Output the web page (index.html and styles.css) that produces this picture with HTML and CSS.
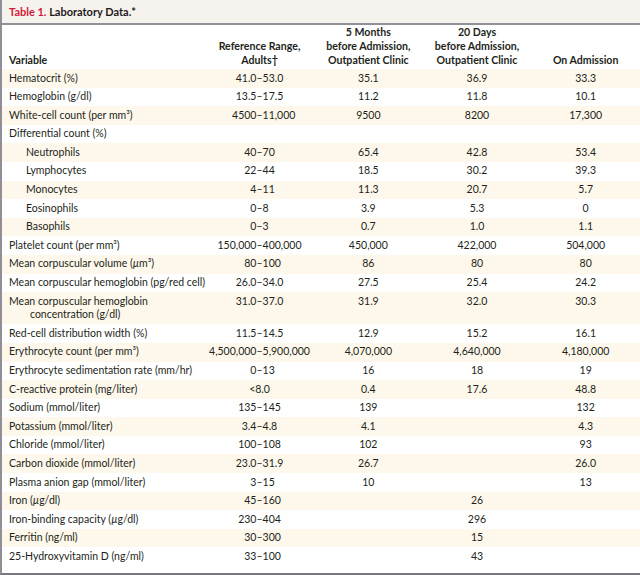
FILE: index.html
```html
<!DOCTYPE html>
<html lang="en">
<head>
<meta charset="utf-8">
<title>Table 1. Laboratory Data</title>
<link rel="stylesheet" href="styles.css">
</head>
<body>
<div class="page">
  <div class="title"><span class="label">Table 1.</span> Laboratory Data.*</div>
  <table class="lab">
    <colgroup>
      <col class="c-var"><col class="c-ref"><col class="c-val"><col class="c-val"><col class="c-val">
    </colgroup>
    <thead>
      <tr>
        <th class="var">Variable</th>
        <th>Reference Range,<br>Adults†</th>
        <th>5 Months<br>before Admission,<br>Outpatient Clinic</th>
        <th>20 Days<br>before Admission,<br>Outpatient Clinic</th>
        <th>On Admission</th>
      </tr>
    </thead>
    <tbody>
      <tr><td class="var">Hematocrit (%)</td><td><div class="rng"><span>41.0</span><span>–</span><span>53.0</span></div></td><td>35.1</td><td>36.9</td><td>33.3</td></tr>
      <tr><td class="var">Hemoglobin (g/dl)</td><td><div class="rng"><span>13.5</span><span>–</span><span>17.5</span></div></td><td>11.2</td><td>11.8</td><td>10.1</td></tr>
      <tr><td class="var">White-cell count (per mm³)</td><td><div class="rng"><span>4500</span><span>–</span><span>11,000</span></div></td><td>9500</td><td>8200</td><td>17,300</td></tr>
      <tr><td class="var">Differential count (%)</td><td></td><td></td><td></td><td></td></tr>
      <tr><td class="var sub">Neutrophils</td><td><div class="rng"><span>40</span><span>–</span><span>70</span></div></td><td>65.4</td><td>42.8</td><td>53.4</td></tr>
      <tr><td class="var sub">Lymphocytes</td><td><div class="rng"><span>22</span><span>–</span><span>44</span></div></td><td>18.5</td><td>30.2</td><td>39.3</td></tr>
      <tr><td class="var sub">Monocytes</td><td><div class="rng"><span>4</span><span>–</span><span>11</span></div></td><td>11.3</td><td>20.7</td><td>5.7</td></tr>
      <tr><td class="var sub">Eosinophils</td><td><div class="rng"><span>0</span><span>–</span><span>8</span></div></td><td>3.9</td><td>5.3</td><td>0</td></tr>
      <tr><td class="var sub">Basophils</td><td><div class="rng"><span>0</span><span>–</span><span>3</span></div></td><td>0.7</td><td>1.0</td><td>1.1</td></tr>
      <tr><td class="var">Platelet count (per mm³)</td><td><div class="rng"><span>150,000</span><span>–</span><span>400,000</span></div></td><td>450,000</td><td>422,000</td><td>504,000</td></tr>
      <tr><td class="var">Mean corpuscular volume (<i>µ</i>m³)</td><td><div class="rng"><span>80</span><span>–</span><span>100</span></div></td><td>86</td><td>80</td><td>80</td></tr>
      <tr><td class="var">Mean corpuscular hemoglobin (pg/red cell)</td><td><div class="rng"><span>26.0</span><span>–</span><span>34.0</span></div></td><td>27.5</td><td>25.4</td><td>24.2</td></tr>
      <tr class="tall"><td class="var">Mean corpuscular hemoglobin<br><span class="cont">concentration (g/dl)</span></td><td><div class="rng"><span>31.0</span><span>–</span><span>37.0</span></div></td><td>31.9</td><td>32.0</td><td>30.3</td></tr>
      <tr><td class="var">Red-cell distribution width (%)</td><td><div class="rng"><span>11.5</span><span>–</span><span>14.5</span></div></td><td>12.9</td><td>15.2</td><td>16.1</td></tr>
      <tr><td class="var">Erythrocyte count (per mm³)</td><td><div class="rng"><span>4,500,000</span><span>–</span><span>5,900,000</span></div></td><td>4,070,000</td><td>4,640,000</td><td>4,180,000</td></tr>
      <tr><td class="var">Erythrocyte sedimentation rate (mm/hr)</td><td><div class="rng"><span>0</span><span>–</span><span>13</span></div></td><td>16</td><td>18</td><td>19</td></tr>
      <tr><td class="var">C-reactive protein (mg/liter)</td><td>&lt;8.0</td><td>0.4</td><td>17.6</td><td>48.8</td></tr>
      <tr><td class="var">Sodium (mmol/liter)</td><td><div class="rng"><span>135</span><span>–</span><span>145</span></div></td><td>139</td><td></td><td>132</td></tr>
      <tr><td class="var">Potassium (mmol/liter)</td><td><div class="rng"><span>3.4</span><span>–</span><span>4.8</span></div></td><td>4.1</td><td></td><td>4.3</td></tr>
      <tr><td class="var">Chloride (mmol/liter)</td><td><div class="rng"><span>100</span><span>–</span><span>108</span></div></td><td>102</td><td></td><td>93</td></tr>
      <tr><td class="var">Carbon dioxide (mmol/liter)</td><td><div class="rng"><span>23.0</span><span>–</span><span>31.9</span></div></td><td>26.7</td><td></td><td>26.0</td></tr>
      <tr><td class="var">Plasma anion gap (mmol/liter)</td><td><div class="rng"><span>3</span><span>–</span><span>15</span></div></td><td>10</td><td></td><td>13</td></tr>
      <tr><td class="var">Iron (<i>µ</i>g/dl)</td><td><div class="rng"><span>45</span><span>–</span><span>160</span></div></td><td></td><td>26</td><td></td></tr>
      <tr><td class="var">Iron-binding capacity (<i>µ</i>g/dl)</td><td><div class="rng"><span>230</span><span>–</span><span>404</span></div></td><td></td><td>296</td><td></td></tr>
      <tr><td class="var">Ferritin (ng/ml)</td><td><div class="rng"><span>30</span><span>–</span><span>300</span></div></td><td></td><td>15</td><td></td></tr>
      <tr><td class="var">25-Hydroxyvitamin D (ng/ml)</td><td><div class="rng"><span>33</span><span>–</span><span>100</span></div></td><td></td><td>43</td><td></td></tr>
    </tbody>
  </table>
</div>
</body>
</html>
```

FILE: styles.css
```css
* { box-sizing: border-box; }
html, body { margin: 0; padding: 0; background: #fff; }
body {
  font-family: Lato, "Open Sans", "Liberation Sans", sans-serif;
  font-size: 10.5px;
  color: #231f20;
}
.page {
  width: 640px;
  height: 575px;
  border-left: 2px solid #8f8f95;
  border-bottom: 2px solid #77777d;
  overflow: hidden;
}
.title {
  height: 25px;
  background: #f6f3ee;
  border-bottom: 2px solid #909097;
  padding: 5px 0 0 7px;
  font-weight: 700;
  font-size: 11px;
  line-height: 14px;
  color: #1f1b1c;
}
.title .label { color: #d2193a; }
.lab {
  width: 638px;
  table-layout: fixed;
  border-collapse: collapse;
}
.c-var { width: 203px; }
.c-ref { width: 109px; }
.c-val { width: 108.67px; }
.lab th {
  font-weight: 700;
  font-size: 10.6px;
  line-height: 14px;
  height: 43px;
  padding: 0 0 2px;
  vertical-align: bottom;
  text-align: center;
}
.lab td {
  line-height: 13.6px;
  padding: 2.5px 0;
  text-align: center;
  vertical-align: top;
  white-space: nowrap;
}
.lab .var { text-align: left; padding-left: 7px; }
.lab td.sub { padding-left: 24px; }
.cont { padding-left: 21px; }
.lab tbody tr:nth-child(odd) { background: #fdf8eb; }
.rng {
  display: grid;
  grid-template-columns: 1fr auto 1fr;
}
.rng span:first-child { text-align: right; }
.rng span:last-child { text-align: left; }
i { font-style: italic; }
```
